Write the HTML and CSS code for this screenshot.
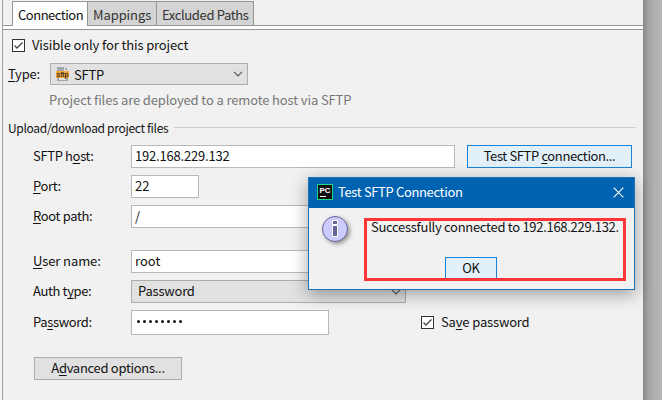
FILE: index.html
```html
<!DOCTYPE html>
<html lang="en">
<head>
<meta charset="utf-8">
<title>Deployment</title>
<link rel="stylesheet" href="styles.css">
</head>
<body>
<main class="panel">
  <nav class="tabs">
    <div class="tab active"><span>Connection</span></div>
    <div class="tab mappings"><span>Mappings</span></div>
    <div class="tab excluded"><span>Excluded Paths</span></div>
  </nav>
  <div class="tab-rule"></div>

  <div class="visible-row">
    <svg class="check" viewBox="0 0 13 13"><rect x=".5" y=".5" width="12" height="12"/><path d="M2.5 6.5 5 9 10.5 3.5"/></svg>
    <span class="t-visible">Visible only for this project</span>
  </div>

  <div class="type-row">
    <label class="t-type"><u>T</u>ype:</label>
    <div class="select type-select">
      <svg class="sftp-icon" viewBox="0 0 14 16"><path d="M1 1h7v4h4v10H1z" fill="#a4a6a7"/><path d="M9 1l3 3H9z" fill="#a4a6a7"/><path d="M3 13h7" stroke="#e1e1e1" stroke-width="2"/><rect y="5" width="13" height="7" fill="#f3a63b"/><text x="6.5" y="10.7" text-anchor="middle">sftp</text></svg>
      <span>SFTP</span>
      <svg class="chev" viewBox="0 0 10 6"><path d="M1 .8 5 4.8 9 .8"/></svg>
    </div>
  </div>
  <p class="hint">Project files are deployed to a remote host via SFTP</p>

  <h2 class="section"><span>Upload/download project files</span></h2>

  <div class="row">
    <label class="t-host">SFTP h<u>o</u>st:</label>
    <div class="field wide"><span class="t-ip">192.168.229.132</span></div>
    <button class="btn primary test"><span>Test SFTP <u>c</u>onnection...</span></button>
  </div>
  <div class="row">
    <label class="t-port"><u>P</u>ort:</label>
    <div class="field port">22</div>
  </div>
  <div class="row root">
    <label class="t-root"><u>R</u>oot path:</label>
    <div class="field wide">/</div>
  </div>
  <div class="row">
    <label class="t-user"><u>U</u>ser name:</label>
    <div class="field wide"><span class="t-rootval">root</span></div>
  </div>
  <div class="row">
    <label class="t-auth">Auth t<u>y</u>pe:</label>
    <div class="select auth"><span>Password</span><svg class="chev" viewBox="0 0 10 6"><path d="M1 .8 5 4.8 9 .8"/></svg></div>
  </div>
  <div class="row pass">
    <label class="t-pass">Pa<u>s</u>sword:</label>
    <div class="field password"><i></i><i></i><i></i><i></i><i></i><i></i><i></i><i></i></div>
    <div class="save">
      <svg class="check" viewBox="0 0 13 13"><rect x=".5" y=".5" width="12" height="12"/><path d="M2.5 6.5 5 9 10.5 3.5"/></svg>
      <span>Sa<u>v</u>e password</span>
    </div>
  </div>
  <button class="btn advanced"><span>A<u>d</u>vanced options...</span></button>
</main>

<section class="dialog">
  <header>
    <svg class="pc-icon" viewBox="0 0 16 16"><rect x=".5" y=".5" width="15" height="15" fill="#111" stroke="#21d789"/><text x="2.4" y="8.6" textLength="11" lengthAdjust="spacingAndGlyphs">PC</text><path d="M3 12.5h6" stroke="#fff"/></svg>
    <span>Test SFTP Connection</span>
    <svg class="close" viewBox="0 0 11 11"><path d="M.7.7 10.3 10.3M10.3.7.7 10.3"/></svg>
  </header>
  <div class="dialog-body">
    <svg class="info" viewBox="0 0 26 26"><circle cx="13" cy="13" r="12.5" fill="#ccccff" stroke="#666699"/><path d="M10.5 4.5h5v4h-5zM10.5 9.5h5v11h-5z" fill="#666699" stroke="#fff"/></svg>
    <div class="highlight">
      <p>Successfully connected to 192.168.229.132.</p>
      <button class="btn primary ok"><span>OK</span></button>
    </div>
  </div>
</section>
</body>
</html>
```
FILE: styles.css
```css
* { box-sizing: border-box; }
body {
  margin: 0;
  width: 662px;
  height: 400px;
  overflow: hidden;
  position: relative;
  background: linear-gradient(90deg, #f4f4f4 2px, #b5b5b5 2px, #b5b5b5 643px, #898989 643px, #a3a3a3 648px, #b1b1b1 655px, #b5b5b5 662px);
  font: 13px/20px "Noto Sans CJK SC", "Noto Sans", sans-serif;
  color: #111;
}
span, label, p { white-space: nowrap; }
u { text-decoration: underline; text-underline-offset: 2px; text-decoration-thickness: 1px; text-decoration-skip-ink: none; }
svg { display: block; flex: none; }
.panel {
  margin-left: 2px;
  width: 641px;
  height: 400px;
  border-left: 1px solid #a0a0a0;
  background: #f1f1f1;
}
.tabs { display: flex; height: 25px; padding: 1px 0 0 9px; }
.tab {
  height: 25px;
  border: 1px solid #919791;
  border-left: 0;
  background: #d4d4d4;
  color: #333;
  padding-left: 5px;
  line-height: 25px;
  letter-spacing: -.36px;
}
.tab.active { width: 76px; height: 25px; background: #fff; border-left: 1px solid #919791; border-bottom: 0; color: #111; letter-spacing: -.48px; }
.mappings { width: 69px; letter-spacing: -.1px; }
.excluded { width: 97px; }
.tab-rule { height: 5px; border: solid #919791; border-width: 1px 0; background: #fff; }
.visible-row { display: flex; gap: 7px; align-items: center; height: 20px; margin: 5px 0 0 9px; }
.t-visible { line-height: 18px; letter-spacing: -.13px; }
.check { width: 13px; height: 13px; }
.check rect { fill: #fff; stroke: #333; }
.check path { fill: none; stroke: #444; stroke-width: 1.3; }
.type-row { display: flex; margin: 8px 0 0 5px; height: 22px; line-height: 21px; letter-spacing: -.2px; }
.type-row label { width: 42px; }
.select { display: flex; align-items: center; background: #e1e1e1; border: 1px solid #adadad; }
.type-select { width: 198px; padding: 0 4px 0 5px; }
.sftp-icon { width: 14px; height: 16px; margin-right: 4px; }
.sftp-icon text { font: bold 6.5px "Liberation Sans", sans-serif; fill: #3d3020; letter-spacing: 0; }
.chev { width: 10px; height: 6px; margin-left: auto; }
.chev path { fill: none; stroke: #555; stroke-width: 1.2; }
.hint { margin: 5px 0 0 46px; color: #777; letter-spacing: -.13px; }
.section { margin: 8px 7px 0 5px; height: 20px; font-size: 12px; font-weight: 400; letter-spacing: -.31px; display: flex; align-items: center; gap: 6px; }
.section::after { content: ""; flex: 1; height: 1px; margin-top: -2px; background: #cfcfcf; }
.section + .row { margin-top: 7px; }
.row { display: flex; height: 23px; margin: 0 0 7px 30px; line-height: 22px; }
.row label { width: 98px; letter-spacing: -.36px; }
.row .t-user { letter-spacing: -.1px; }
.row.root { margin-bottom: 22px; }
.field { background: #fff; border: 1px solid #b9b9b9; padding-left: 3px; line-height: 20px; }
.t-ip { letter-spacing: -.2px; }
.wide { width: 324px; }
.port { width: 68px; }
.auth { width: 275px; padding: 0 4px 0 6px; letter-spacing: -.2px; }
.auth span { margin-top: -1px; }
.row.pass { height: 25px; line-height: 24px; margin-bottom: 22px; }
.password { width: 198px; display: flex; gap: 3px; padding: 9px 0 0 5px; }
.password i { width: 3px; height: 3px; border-radius: 50%; background: #111; }
.save { display: flex; align-items: center; gap: 7px; height: 24px; margin-left: 92px; letter-spacing: -.15px; line-height: 20px; }
.save span { margin-top: -1px; }
.btn {
  font: inherit;
  color: #111;
  padding: 0 0 2px;
  display: block;
  text-align: center;
  background: #e1e1e1;
  border: 1px solid #adadad;
  line-height: 19px;
}
.primary { background: #e2f0fa; border-color: #1883d7; }
.test { width: 165px; height: 23px; margin-left: 12px; letter-spacing: -.38px; }
.advanced { width: 148px; height: 23px; margin-left: 31px; letter-spacing: -.3px; }
.dialog {
  position: absolute;
  left: 308px;
  top: 177px;
  width: 327px;
  height: 113px;
  background: #f1f1f1;
  border: 1px solid #1b74b9;
  box-shadow: 0 4px 16px rgba(0, 0, 0, .36);
}
.dialog header { display: flex; align-items: center; height: 30px; background: #0063b1; color: #fff; padding: 0 10px 2px 8px; letter-spacing: -.35px; }
.pc-icon { width: 16px; height: 16px; margin-right: 5px; }
.pc-icon text { font: bold 8px "Liberation Sans", sans-serif; fill: #fff; letter-spacing: 0; }
.close { width: 11px; height: 11px; margin-left: auto; }
.close path { stroke: #fff; stroke-width: 1.1; }
.dialog-body { display: flex; padding: 8px 0 0 13px; }
.info { width: 26px; height: 26px; filter: drop-shadow(2px 2px 2px rgba(0, 0, 0, .4)); }
.highlight { width: 262px; height: 63px; margin: 2px 0 0 16px; border: 3px solid #fc3636; padding-left: 4px; }
.highlight p { margin: -4px 0 0; line-height: 20px; letter-spacing: -.29px; }
.ok { width: 52px; height: 21px; margin: 20px 0 0 74px; border-bottom: 0; letter-spacing: -.2px; }
```
